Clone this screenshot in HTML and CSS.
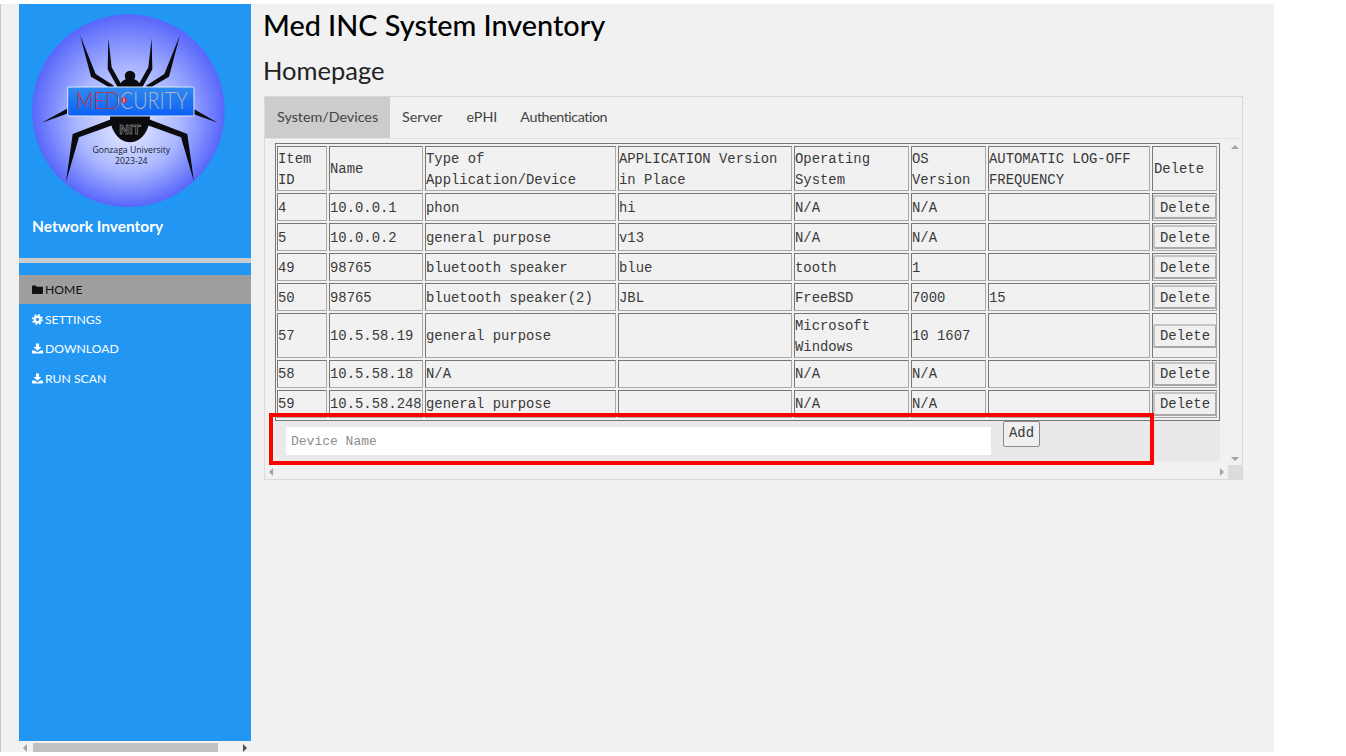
FILE: index.html
```html
<!DOCTYPE html>
<html lang="en">
<head>
  <meta charset="UTF-8" />
  <meta name="viewport" content="width=device-width, initial-scale=1.0"/>
  <title>Network Inventory</title>
  <link rel="stylesheet" href="styles.css">
</head>
<body>
  <div class="page">

    <!-- Sidebar -->
    <div class="side-wrap">
      <div class="sidebar">
        <div class="brand">
          <svg class="logo" viewBox="0 0 615 600" role="img" aria-label="Medcurity logo">
            <defs>
              <radialGradient id="disc" cx="50%" cy="50%" r="50%" fx="50%" fy="60%">
                <stop offset="0" stop-color="#e6ebff"/>
                <stop offset="0.55" stop-color="#a9b6ff"/>
                <stop offset="1" stop-color="#5866fb"/>
              </radialGradient>
              <linearGradient id="plate" x1="0" y1="0" x2="0" y2="1">
                <stop offset="0" stop-color="#2f8bee"/>
                <stop offset="1" stop-color="#0b60f6"/>
              </linearGradient>
              <linearGradient id="word" gradientUnits="userSpaceOnUse" x1="152" y1="0" x2="488" y2="0">
                <stop offset="0.38" stop-color="#c8323f"/>
                <stop offset="0.38" stop-color="#aeb4c4"/>
              </linearGradient>
            </defs>
            <circle cx="310" cy="302" r="289" fill="url(#disc)"/>
            <g fill="#0b0b0f">
              <polygon points="165,75 212,192 268,228 256,234 198,200"/>
              <polygon points="250,85 260,172 290,225 278,232 248,178"/>
              <polygon points="465,75 418,192 362,228 374,234 432,200"/>
              <polygon points="380,85 370,172 340,225 352,232 382,178"/>
              <circle cx="315" cy="198" r="16"/>
              <path d="M278 235 Q290 205 315 205 Q340 205 352 235Z"/>
              <polygon points="50,338 130,294 130,310"/>
              <polygon points="578,338 505,296 505,312"/>
              <polygon points="123,515 143,372 258,328 262,346 162,382"/>
              <polygon points="507,515 487,372 372,328 368,346 468,382"/>
              <path d="M255 316 H375 C375 360 350 397 315 397 C280 397 255 360 255 316Z"/>
            </g>
            <rect x="128" y="231" width="379" height="87" rx="4" fill="url(#plate)" stroke="#dfe6f7" stroke-width="3"/>
            <text class="logo-word" x="152" y="298" textLength="336" lengthAdjust="spacingAndGlyphs" fill="url(#word)">MEDCURITY</text>
            <circle cx="297" cy="271" r="9" fill="#c8323f"/>
            <rect x="295.500" y="265" width="3" height="12" fill="#dfe6f7"/>
            <text class="logo-nit" x="315" y="372" text-anchor="middle">NIT</text>
            <text class="logo-small" x="319" y="428" text-anchor="middle">Gonzaga University</text>
            <text class="logo-small" x="319" y="463" text-anchor="middle">2023-24</text>
          </svg>
          <h3 class="brand-name">Network Inventory</h3>
        </div>
        <div class="side-rule"></div>
        <div class="side-menu">
          <a href="#" class="side-link active">
            <svg class="icon" viewBox="0 0 14 12"><path d="M1.2 1h3.6l1.2 1.4h6.8c.6 0 1.2.5 1.2 1.1v7c0 .7-.6 1.2-1.2 1.2H1.2C.5 11.7 0 11.200 0 10.500V2.200C0 1.500.5 1 1.200 1z"/></svg>
            HOME
          </a>
          <a href="#" class="side-link">
            <svg class="icon" viewBox="0 0 14 14">
              <circle cx="7" cy="7" r="3.600" fill="none" stroke="currentColor" stroke-width="3"/>
              <circle cx="7" cy="7" r="6" fill="none" stroke="currentColor" stroke-width="2" stroke-dasharray="2.350 2.362"/>
            </svg>
            SETTINGS
          </a>
          <a href="#" class="side-link">
            <svg class="icon" viewBox="0 0 14 13"><path d="M5 0h4v4.500h3L7 9.500 2 4.500h3zM0 9h3.500L7 11.500 10.500 9H14v4H0z"/></svg>
            DOWNLOAD
          </a>
          <a href="#" class="side-link">
            <svg class="icon" viewBox="0 0 14 13"><path d="M5 0h4v4.500h3L7 9.500 2 4.500h3zM0 9h3.500L7 11.500 10.500 9H14v4H0z"/></svg>
            RUN SCAN
          </a>
        </div>
      </div>
      <div class="side-scroll">
        <span class="arrow arrow-left"></span>
        <span class="side-thumb"></span>
        <span class="arrow arrow-right dark"></span>
      </div>
    </div>

    <!-- Main content -->
    <div class="main">
      <h1>Med INC System Inventory</h1>
      <h2>Homepage</h2>

      <div class="panel">
        <div class="tabs">
          <a href="#" class="tab active">System/Devices</a>
          <a href="#" class="tab">Server</a>
          <a href="#" class="tab">ePHI</a>
          <a href="#" class="tab">Authentication</a>
        </div>
        <div class="panel-body">
          <div class="panel-content">
            <table class="devices">
              <colgroup>
                <col class="c1"><col class="c2"><col class="c3"><col class="c4">
                <col class="c5"><col class="c6"><col class="c7"><col class="c8">
              </colgroup>
              <tr class="tall head">
                <td>Item ID</td><td>Name</td><td>Type of Application/Device</td><td>APPLICATION Version in Place</td>
                <td>Operating System</td><td>OS Version</td><td>AUTOMATIC LOG-OFF FREQUENCY</td><td>Delete</td>
              </tr>
              <tr>
                <td>4</td><td>10.0.0.1</td><td>phon</td><td>hi</td><td>N/A</td><td>N/A</td><td></td>
                <td><button class="del-btn">Delete</button></td>
              </tr>
              <tr>
                <td>5</td><td>10.0.0.2</td><td>general purpose</td><td>v13</td><td>N/A</td><td>N/A</td><td></td>
                <td><button class="del-btn">Delete</button></td>
              </tr>
              <tr>
                <td>49</td><td>98765</td><td>bluetooth speaker</td><td>blue</td><td>tooth</td><td>1</td><td></td>
                <td><button class="del-btn">Delete</button></td>
              </tr>
              <tr>
                <td>50</td><td>98765</td><td>bluetooth speaker(2)</td><td>JBL</td><td>FreeBSD</td><td>7000</td><td>15</td>
                <td><button class="del-btn">Delete</button></td>
              </tr>
              <tr class="tall">
                <td>57</td><td>10.5.58.19</td><td>general purpose</td><td></td><td>Microsoft Windows</td><td>10 1607</td><td></td>
                <td><button class="del-btn">Delete</button></td>
              </tr>
              <tr class="low">
                <td>58</td><td>10.5.58.18</td><td>N/A</td><td></td><td>N/A</td><td>N/A</td><td></td>
                <td><button class="del-btn">Delete</button></td>
              </tr>
              <tr class="low">
                <td>59</td><td>10.5.58.248</td><td>general purpose</td><td></td><td>N/A</td><td>N/A</td><td></td>
                <td><button class="del-btn">Delete</button></td>
              </tr>
            </table>
            <form class="add-form">
              <input type="text" class="add-input" placeholder="Device Name" />
              <button type="button" class="add-btn">Add</button>
            </form>
          </div>
          <div class="scroll-y">
            <span class="arrow arrow-up"></span>
            <span class="arrow arrow-down"></span>
          </div>
          <div class="scroll-x">
            <span class="arrow arrow-left"></span>
            <span class="arrow arrow-right"></span>
          </div>
          <div class="scroll-corner"></div>
        </div>
        <!-- red annotation box drawn over the form -->
        <div class="callout"></div>
      </div>
    </div>
  </div>
</body>
</html>
```

FILE: styles.css
```css
/* Global Styles */
* {
  margin: 0;
  padding: 0;
  box-sizing: border-box;
}

body {
  background: #fff;
  font-family: 'Lato', 'Open Sans', sans-serif;
  height: 756px;
  overflow: hidden;
  padding: 4px 0 4px 0;
}

.page {
  width: 1274px;
  height: 748px;
  background: #f1f1f1;
  border-left: 1px solid #c8c8c8;
  display: flex;
}

/* Sidebar */
.side-wrap {
  width: 232px;
  margin-left: 18px;
  display: flex;
  flex-direction: column;
}

.sidebar {
  flex: 1;
  background: #2196f3;
  color: #fff;
}

.brand {
  height: 254px;
  padding: 6px 0 0 6px;
}

.logo {
  display: block;
  width: 205px;
  height: 200px;
}

.logo-word {
  font-family: 'Lato', sans-serif;
  font-size: 72px;
  font-weight: 300;
}

.logo-nit {
  font-family: 'Liberation Sans', sans-serif;
  font-size: 40px;
  font-weight: bold;
  fill: #111;
  stroke: #b0b0b0;
  stroke-width: 1.5;
}

.logo-small {
  font-family: 'Open Sans', sans-serif;
  font-size: 26px;
  fill: #141a33;
}

.brand-name {
  font-size: 15.500px;
  font-weight: 700;
  padding: 7px 0 0 7px;
}

.side-rule {
  height: 5px;
  background: #ccc;
}

.side-menu {
  padding-top: 11.500px;
}

.side-link {
  display: flex;
  align-items: center;
  gap: 2px;
  height: 29.700px;
  padding-left: 13px;
  font-size: 12.200px;
  color: #fff;
  text-decoration: none;
}

.side-link.active {
  background: #9e9e9e;
  color: #111;
}

.icon {
  width: 11px;
  height: 11px;
  fill: currentColor;
}

.side-scroll {
  height: 9px;
  margin-top: 2px;
  display: flex;
  align-items: center;
  padding: 0 4px;
}

.side-thumb {
  width: 185px;
  height: 9px;
  margin-left: 6px;
  background: #c1c1c1;
}

/* Scrollbar arrows */
.arrow {
  display: block;
  width: 0;
  height: 0;
  border: 4px solid transparent;
}

.arrow-left { border-right-color: #a3a3a3; border-left-width: 0; }
.arrow-right { border-left-color: #a3a3a3; border-right-width: 0; }
.arrow-up { border-bottom-color: #a3a3a3; border-top-width: 0; }
.arrow-down { border-top-color: #a3a3a3; border-bottom-width: 0; }
.arrow-right.dark { border-left-color: #505050; margin-left: auto; }

/* Main content */
.main {
  flex: 1;
  padding: 0 31px 0 13px;
}

.main h1 {
  font-size: 28.800px;
  font-weight: 500;
  line-height: 42px;
  margin-left: -1px;
  color: #000;
}

.main h2 {
  font-size: 25.500px;
  font-weight: 400;
  line-height: 32px;
  margin: 8px 0 0 -1px;
  color: #222;
}

.panel {
  position: relative;
  margin-top: 10px;
  width: 979px;
  height: 384px;
  border: 1px solid #d9d9d9;
}

.tabs {
  display: flex;
  height: 42px;
  border-bottom: 1px solid #e2e2e2;
}

.tab {
  display: flex;
  align-items: center;
  padding: 0 12px 2px;
  font-size: 14.300px;
  color: #444;
  text-decoration: none;
}

.tab:last-child {
  margin-left: -1px;
  letter-spacing: -0.45px;
}

.tab.active {
  background: #ccc;
}

.panel-body {
  display: grid;
  grid-template-columns: 1fr 14px;
  grid-template-rows: 1fr 14px;
  height: 340px;
}

.panel-content {
  padding: 4px 0 0 10px;
}

/* Table */
.devices {
  width: 945px;
  table-layout: fixed;
  border-spacing: 2px;
  border: 1px solid #777;
  border-left: 0;
  box-shadow: inset 1px 0 0 #777;
  font-family: 'Liberation Mono', monospace;
  font-size: 13.900px;
  line-height: 21px;
  color: #3a3a3a;
}

.c1 { width: 50px; }
.c2 { width: 94px; }
.c3 { width: 191px; }
.c4 { width: 174px; }
.c5 { width: 115px; }
.c6 { width: 75px; }
.c7 { width: 162px; }
.c8 { width: 65px; }

.devices td {
  height: 28px;
  padding: 2px 0 0 0;
  border: 1px solid #777;
  border-right-color: #aaa;
  border-bottom-color: #aaa;
  overflow: hidden;
}

.devices .tall td {
  height: 45px;
  padding-top: 2px;
  line-height: 20.500px;
}

.devices .low td {
  padding-top: 0;
}

.devices td:last-child {
  padding: 0 0 0 1px;
}

.devices .head td:last-child {
  padding-top: 2px;
}

.devices .low td:last-child {
  padding-bottom: 1px;
}

.del-btn {
  display: block;
  width: 64px;
  height: 24px;
  margin-left: -1px;
  padding-top: 1px;
  background: #f0f0f0;
  border: 2px solid #a8a8a8;
  border-top-color: #c4c4c4;
  border-left-color: #c4c4c4;
  border-radius: 2px;
  font-family: 'Liberation Mono', monospace;
  font-size: 13.900px;
  color: #3a3a3a;
}

/* Add form */
.add-form {
  width: 945px;
  height: 41px;
  background: #e9e9e9;
  display: flex;
  align-items: flex-start;
  padding-left: 11px;
}

.add-input {
  width: 705px;
  height: 28px;
  margin-top: 6px;
  padding-left: 5px;
  background: #fff;
  border: none;
  font-family: 'Liberation Mono', monospace;
  font-size: 13px;
}

.add-input::placeholder {
  color: #8c8c8c;
}

.add-btn {
  width: 37px;
  height: 26px;
  margin-left: 12px;
  padding-bottom: 2px;
  background: #f0f0f0;
  border: 1px solid #8a8a8a;
  border-radius: 2px;
  font-family: 'Liberation Mono', monospace;
  font-size: 13.900px;
  color: #3a3a3a;
}

/* Panel scrollbars */
.scroll-y {
  display: flex;
  flex-direction: column;
  align-items: center;
  justify-content: space-between;
  padding: 6px 0 4px;
}

.scroll-x {
  display: flex;
  align-items: center;
  justify-content: space-between;
  padding: 0 4px;
}

.scroll-corner {
  background: #dcdcdc;
}

/* Red annotation */
.callout {
  position: absolute;
  left: 3.500px;
  top: 316px;
  width: 885px;
  height: 52px;
  border: 4px solid #f00;
}
```
